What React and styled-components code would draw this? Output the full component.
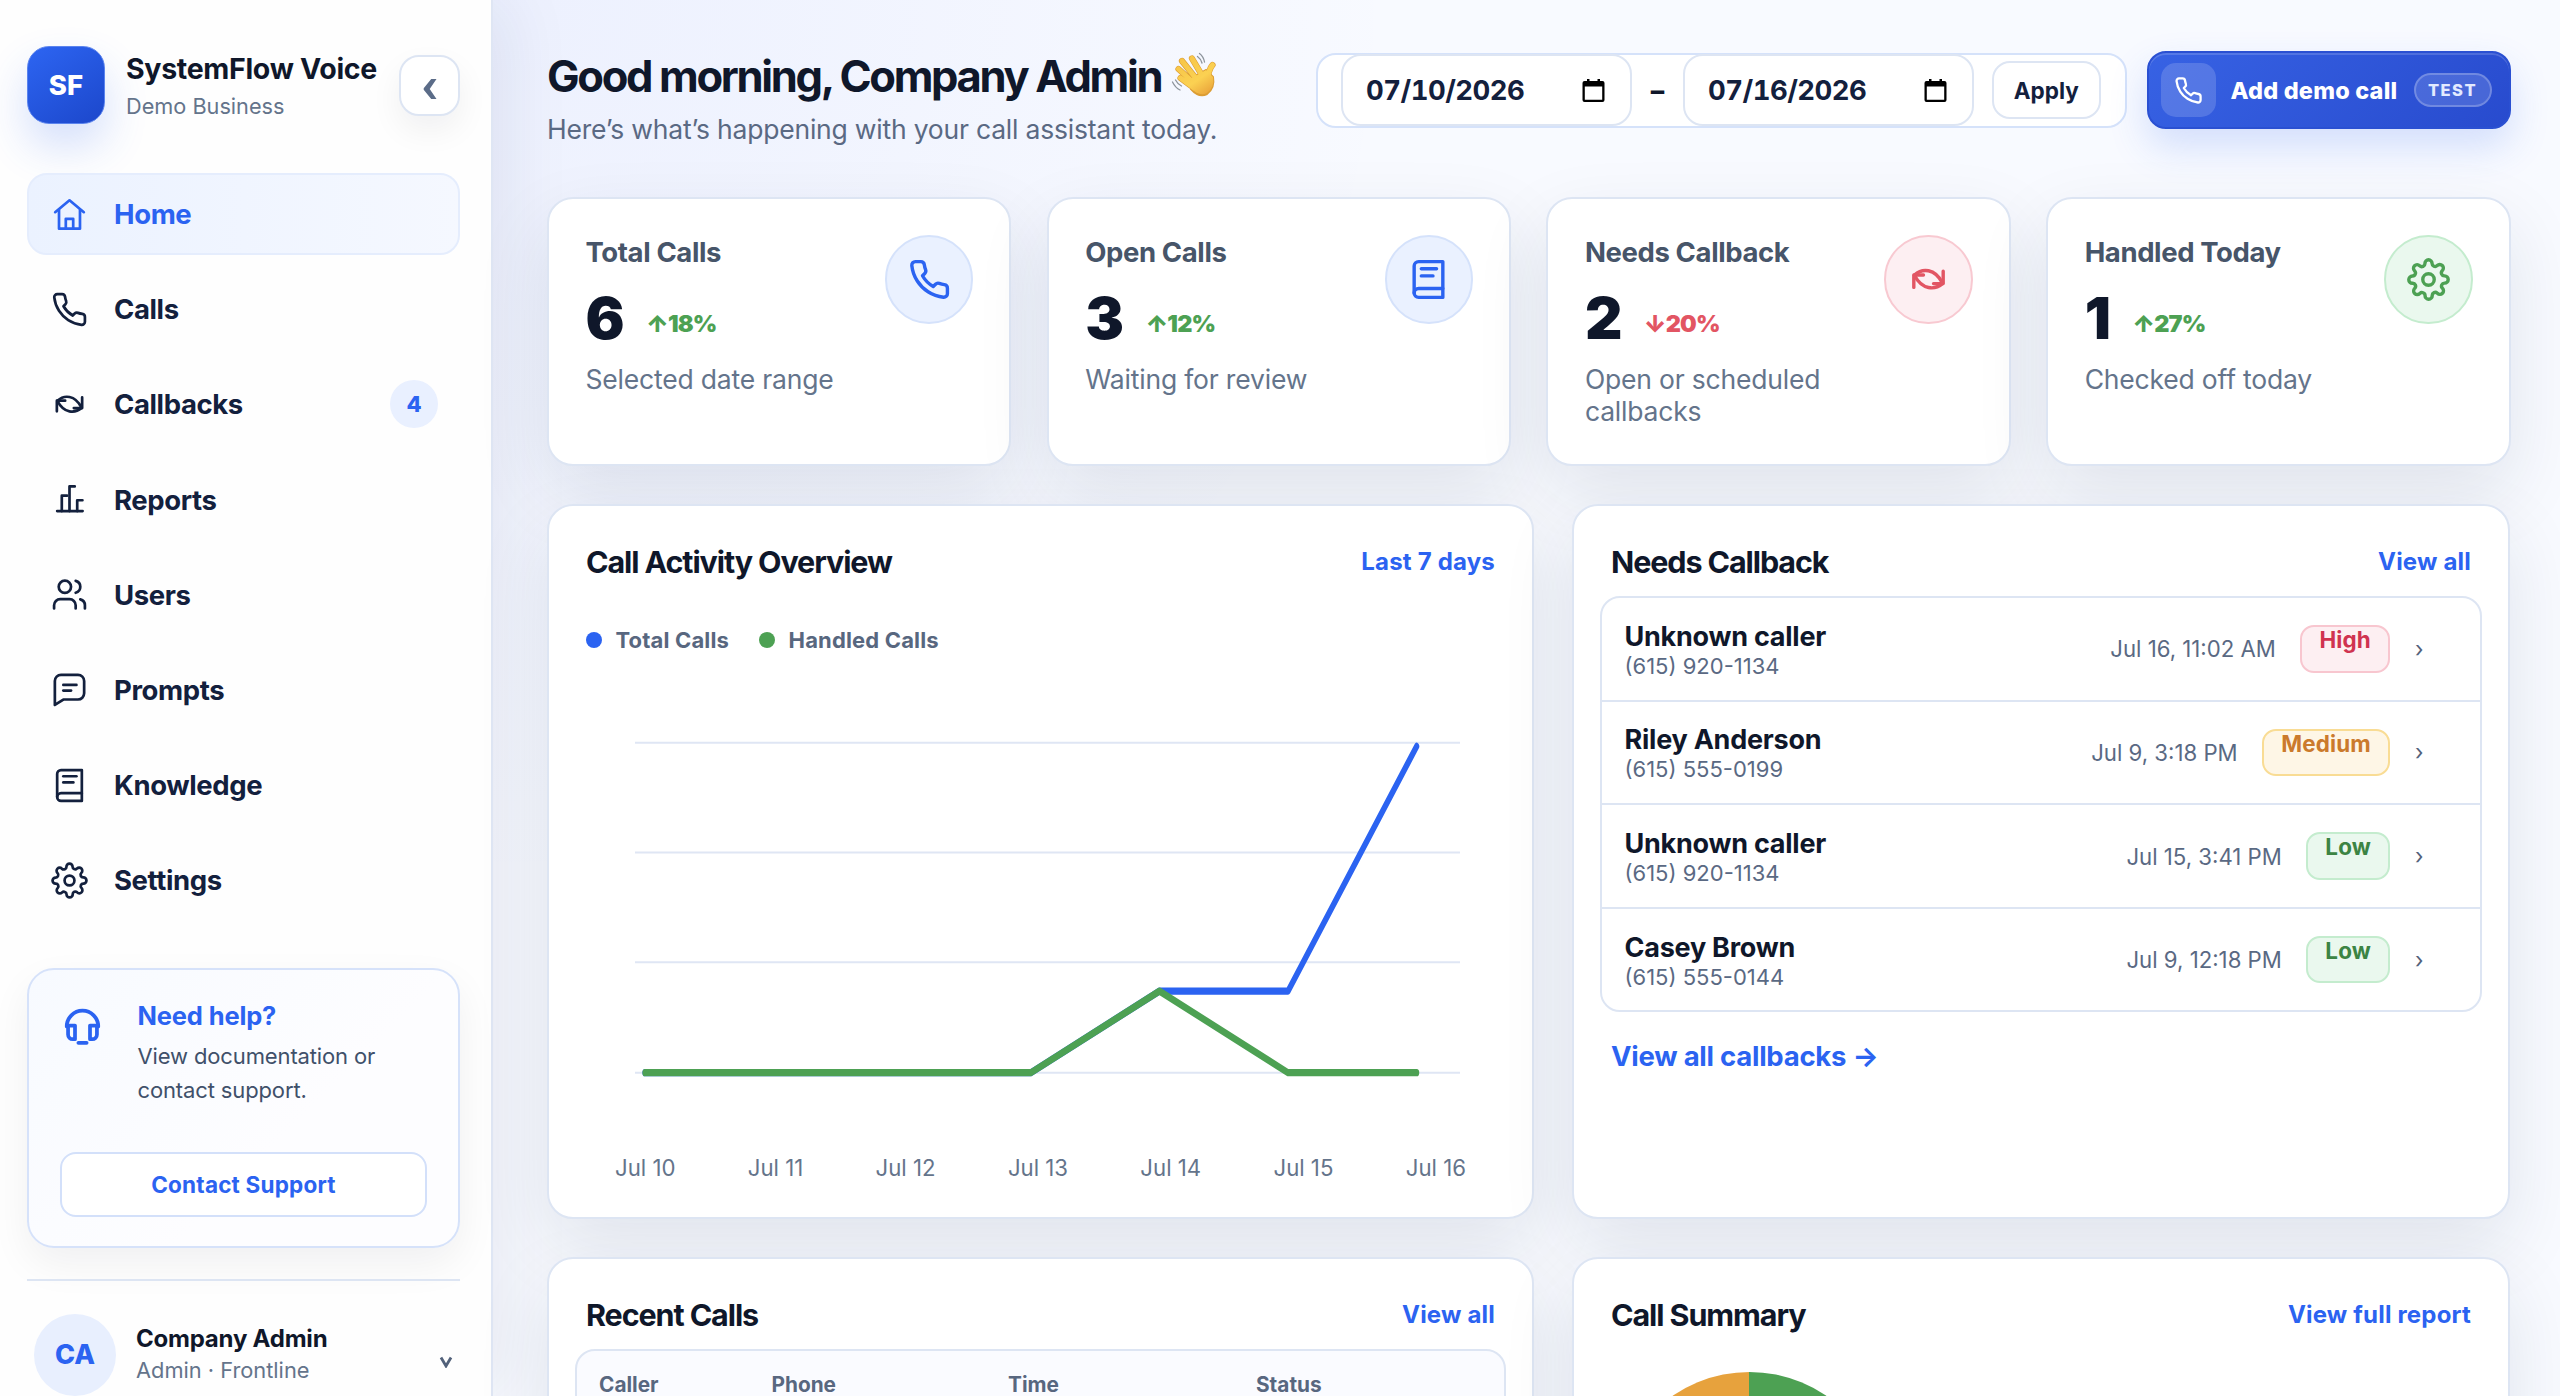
import React from 'react'
import styled, { createGlobalStyle, ThemeProvider } from 'styled-components'

const theme = {
  font: "Inter, 'Liberation Sans', sans-serif",
  ink: '#0f172a',
  nav: '#13203d',
  label: '#475569',
  muted: '#64748b',
  blue: '#2b63f1',
  green: '#4da153',
  red: '#e25563',
  line: '#dde5f3',
}

const tones = {
  blue: { color: '#2b63f1', bg: '#eaf1ff', border: '#d5e2fb' },
  red: { color: '#e25563', bg: '#fdeff2', border: '#f8c9d1' },
  green: { color: '#4da153', bg: '#eaf8ee', border: '#c4ecce' },
}

const priorities = {
  High: { color: '#d03350', bg: '#fdeff2', border: '#f8c6cf' },
  Medium: { color: '#cb7a2c', bg: '#fef6e6', border: '#f9dc94' },
  Low: { color: '#3c8443', bg: '#eaf8ee', border: '#c4ecce' },
}

const icons = {
  home: <><path d="M2.7 10.5 12 2.8l9.3 7.7" /><path d="M5.2 9v12.2h13.6V9" /><path d="M9.6 21v-6.2h4.8V21" /></>,
  phone: <path d="M22 16.92v3a2 2 0 0 1-2.18 2 19.79 19.79 0 0 1-8.63-3.07 19.5 19.5 0 0 1-6-6 19.79 19.79 0 0 1-3.07-8.67A2 2 0 0 1 4.11 2h3a2 2 0 0 1 2 1.72c.13.96.36 1.9.7 2.81a2 2 0 0 1-.45 2.11L8.09 9.91a16 16 0 0 0 6 6l1.27-1.27a2 2 0 0 1 2.11-.45c.91.34 1.85.57 2.81.7A2 2 0 0 1 22 16.92z" />,
  callback: <><path d="M20.2 7.4v6.9h-5.4" /><path d="M3.8 16.4V9.5h5.4" /><path d="M4.2 9.500C8.5 5.600 15.500 5.600 19.800 14" /><path d="M19.800 14.300C15.500 18 8.500 17.900 4.200 9.800" /></>,
  reports: <><path d="M4 19.5h16.5" /><path d="M7 19.5v-10h3.4" /><path d="M12 19.5v-16h3.4" /><path d="M17 19.5v-7h3.4" /></>,
  users: <><path d="M16 21v-2a4 4 0 0 0-4-4H6a4 4 0 0 0-4 4v2" /><circle cx="9" cy="7" r="4" /><path d="M22 21v-2a4 4 0 0 0-3-3.87" /><path d="M16 3.13a4 4 0 0 1 0 7.75" /></>,
  prompts: <><path d="M21.5 14.5a4 4 0 0 1-4 4H8l-5.5 3.5V6.5a4 4 0 0 1 4-4h11a4 4 0 0 1 4 4z" /><path d="M8 9h8.5" /><path d="M8 12.7h5" /></>,
  book: <><path d="M4 19.5A2.5 2.5 0 0 1 6.5 17H20" /><path d="M6.5 2H20v20H6.5A2.5 2.5 0 0 1 4 19.5v-15A2.5 2.5 0 0 1 6.5 2z" /><path d="M8 6h8.5" /><path d="M8 10h6.5" /></>,
  gear: <><circle cx="12" cy="12" r="3.2" /><path d="M19.4 15a1.65 1.65 0 0 0 .33 1.82l.06.06a2 2 0 0 1 0 2.83 2 2 0 0 1-2.83 0l-.06-.06a1.65 1.65 0 0 0-1.82-.33 1.65 1.65 0 0 0-1 1.51V21a2 2 0 0 1-2 2 2 2 0 0 1-2-2v-.09A1.65 1.65 0 0 0 9 19.4a1.65 1.65 0 0 0-1.82.33l-.06.06a2 2 0 0 1-2.83 0 2 2 0 0 1 0-2.83l.06-.06a1.65 1.65 0 0 0 .33-1.82 1.65 1.65 0 0 0-1.51-1H3a2 2 0 0 1-2-2 2 2 0 0 1 2-2h.09A1.65 1.65 0 0 0 4.6 9a1.65 1.65 0 0 0-.33-1.82l-.06-.06a2 2 0 0 1 0-2.83 2 2 0 0 1 2.83 0l.06.06a1.65 1.65 0 0 0 1.82.33H9a1.65 1.65 0 0 0 1-1.51V3a2 2 0 0 1 2-2 2 2 0 0 1 2 2v.09a1.65 1.65 0 0 0 1 1.51 1.65 1.65 0 0 0 1.82-.33l.06-.06a2 2 0 0 1 2.83 0 2 2 0 0 1 0 2.83l-.06.06a1.65 1.65 0 0 0-.33 1.82V9a1.65 1.65 0 0 0 1.51 1H21a2 2 0 0 1 2 2 2 2 0 0 1-2 2h-.09a1.65 1.65 0 0 0-1.51 1z" /></>,
  headset: <><path d="M3.6 12.5a8.4 8.4 0 0 1 16.8 0" /><path d="M4.3 12h3.7v7.3H6.8a2.5 2.5 0 0 1-2.5-2.5z" /><path d="M19.7 12H16v7.3h1.2a2.5 2.5 0 0 0 2.5-2.5z" /><path d="M9.8 21.2h4.4" /></>,
}

function Icon ({ name, size = 37, stroke = 1.75 }) {
  return (
    <svg
      width={size}
      height={size}
      viewBox="0 0 24 24"
      fill="none"
      stroke="currentColor"
      strokeWidth={stroke}
      strokeLinecap="round"
      strokeLinejoin="round"
      overflow="visible"
    >
      {icons[name]}
    </svg>
  )
}

function WaveIcon () {
  const fingers = 'M33 44 19.5 34M35 41 17.5 25M37 37 21 17M42 33 31 14.5M47 37Q47 26 51.5 21'
  return (
    <svg width="64" height="60" viewBox="0 0 64 60" fill="none" strokeLinecap="round">
      <defs>
        <linearGradient id="skin" x1="20" y1="14" x2="46" y2="52" gradientUnits="userSpaceOnUse">
          <stop offset="0" stopColor="#f7c548" />
          <stop offset=".6" stopColor="#fbd152" />
          <stop offset="1" stopColor="#e9a23a" />
        </linearGradient>
      </defs>
      <path d={fingers} stroke="#dc9d33" strokeWidth="6.2" />
      <path d="M31 34 45 26 52 33Q54 44 46 50Q38 54 30 45Z" fill="#dc9d33" stroke="#dc9d33" strokeWidth="2" />
      <path d={fingers} stroke="url(#skin)" strokeWidth="5" />
      <path d="M31 34 45 26 52 33Q54 43 46 49Q38 53 30 44Z" fill="url(#skin)" />
      <g stroke="#8d949c" strokeWidth="1.3">
        <path d="M36.5 12.5q3.5 2.5 4.5 6.5" />
        <path d="M38.5 9.5q4 3 5 8.5" />
        <path d="M14.5 36q2 4 6 6" />
        <path d="M11.5 38q3 6 7.5 8" />
      </g>
    </svg>
  )
}

const CalendarIcon = () => (
  <svg width="23" height="25" viewBox="0 0 23 25">
    <path fill="#000" fillRule="evenodd" d="M5 1h2.5v2h8V1H18v2h2.5A2 2 0 0 1 22.5 5v17a2 2 0 0 1-2 2h-18a2 2 0 0 1-2-2V5a2 2 0 0 1 2-2H5zM2.8 8.6v13.1h17.4V8.6z" />
  </svg>
)

const navItems = [
  { icon: 'home', label: 'Home', active: true },
  { icon: 'phone', label: 'Calls' },
  { icon: 'callback', label: 'Callbacks', count: 4 },
  { icon: 'reports', label: 'Reports' },
  { icon: 'users', label: 'Users' },
  { icon: 'prompts', label: 'Prompts' },
  { icon: 'book', label: 'Knowledge' },
  { icon: 'gear', label: 'Settings' },
]

const stats = [
  { label: 'Total Calls', value: 6, trend: '↑18%', note: 'Selected date range', icon: 'phone', tone: 'blue' },
  { label: 'Open Calls', value: 3, trend: '↑12%', note: 'Waiting for review', icon: 'book', tone: 'blue' },
  { label: 'Needs Callback', value: 2, trend: '↓20%', note: 'Open or scheduled callbacks', icon: 'callback', tone: 'red' },
  { label: 'Handled Today', value: 1, trend: '↑27%', note: 'Checked off today', icon: 'gear', tone: 'green' },
]

const callbacks = [
  { name: 'Unknown caller', phone: '(615) 920-1134', time: 'Jul 16, 11:02 AM', priority: 'High' },
  { name: 'Riley Anderson', phone: '(615) 555-0199', time: 'Jul 9, 3:18 PM', priority: 'Medium' },
  { name: 'Unknown caller', phone: '(615) 920-1134', time: 'Jul 15, 3:41 PM', priority: 'Low' },
  { name: 'Casey Brown', phone: '(615) 555-0144', time: 'Jul 9, 12:18 PM', priority: 'Low' },
]

const days = ['Jul 10', 'Jul 11', 'Jul 12', 'Jul 13', 'Jul 14', 'Jul 15', 'Jul 16']
const totalCalls = [0, 0, 0, 0, 1, 1, 4]
const handledCalls = [0, 0, 0, 0, 1, 0, 0]

const toPoints = (values) => values.map((v, i) => `${44.7 + i * 99.15},${209.7 - v * 44.7}`).join(' ')

function Chart () {
  return (
    <ChartSvg viewBox="0 0 700 240" preserveAspectRatio="none">
      {[28.9, 89, 149.2, 209.7].map((y) => (
        <line key={y} x1="37" x2="673" y1={y} y2={y} stroke="#dfe6f4" strokeWidth="1.1" />
      ))}
      <g fill="none" strokeWidth="4" strokeLinecap="round" strokeLinejoin="round">
        <polyline points={toPoints(totalCalls)} stroke="#2b63f1" />
        <polyline points={toPoints(handledCalls)} stroke="#4da153" />
      </g>
    </ChartSvg>
  )
}

function Sidebar () {
  return (
    <Aside>
      <Brand>
        <Logo>SF</Logo>
        <BrandText>
          <BrandName>SystemFlow Voice</BrandName>
          <BrandSub>Demo Business</BrandSub>
        </BrandText>
        <Collapse aria-label="Collapse sidebar">
          <svg width="14" height="20" viewBox="0 0 14 20"><path d="M8.2 0H13.5L6.7 10 13.5 20H8.2L.7 10.8V9.2Z" fill="currentColor" /></svg>
        </Collapse>
      </Brand>
      <Nav>
        {navItems.map((item) => (
          <NavItem key={item.label} $active={item.active}>
            <Icon name={item.icon} />
            <span>{item.label}</span>
            {!!item.count && <Count>{item.count}</Count>}
          </NavItem>
        ))}
      </Nav>
      <Help>
        <HelpTop>
          <Icon name="headset" size={45} stroke={2} />
          <div>
            <HelpTitle>Need help?</HelpTitle>
            <HelpText>View documentation or contact support.</HelpText>
          </div>
        </HelpTop>
        <HelpButton>Contact Support</HelpButton>
      </Help>
      <Account>
        <Avatar>CA</Avatar>
        <div>
          <AccountName>Company Admin</AccountName>
          <AccountRole>Admin · Frontline</AccountRole>
        </div>
        <svg width="14" height="12" viewBox="0 0 14 12"><path d="M2 1.5 7 10l5-8.5" fill="none" stroke="#52617a" strokeWidth="2.8" /></svg>
      </Account>
    </Aside>
  )
}

function App () {
  return (
    <ThemeProvider theme={theme}>
      <GlobalStyle />
      <Page>
        <Sidebar />
        <Main>
          <Header>
            <div>
              <Heading>Good morning, Company Admin<WaveIcon /></Heading>
              <SubHeading>Here’s what’s happening with your call assistant today.</SubHeading>
            </div>
            <Controls>
              <DateRange>
                <DateField>07/10/2026<CalendarIcon /></DateField>
                <Dash>–</Dash>
                <DateField>07/16/2026<CalendarIcon /></DateField>
                <Apply>Apply</Apply>
              </DateRange>
              <DemoButton>
                <DemoIcon><Icon name="phone" size={29} stroke={1.9} /></DemoIcon>
                <span>Add demo call</span>
                <TestTag>TEST</TestTag>
              </DemoButton>
            </Controls>
          </Header>

          <StatGrid>
            {stats.map((s) => (
              <StatCard key={s.label}>
                <div>
                  <StatLabel>{s.label}</StatLabel>
                  <StatRow>
                    <StatValue>{s.value}</StatValue>
                    <Trend $tone={s.tone === 'red' ? 'red' : 'green'}>{s.trend}</Trend>
                  </StatRow>
                  <StatNote>{s.note}</StatNote>
                </div>
                <StatIcon $tone={s.tone}><Icon name={s.icon} size={43} stroke={1.9} /></StatIcon>
              </StatCard>
            ))}
          </StatGrid>

          <PanelGrid>
            <Panel>
              <PanelHead>
                <PanelTitle>Call Activity Overview</PanelTitle>
                <PanelLink>Last 7 days</PanelLink>
              </PanelHead>
              <Legend>
                <LegendItem $color="#2b63f1">Total Calls</LegendItem>
                <LegendItem $color="#4da153">Handled Calls</LegendItem>
              </Legend>
              <Chart />
              <Days>{days.map((d) => <span key={d}>{d}</span>)}</Days>
            </Panel>
            <Panel>
              <PanelHead>
                <PanelTitle>Needs Callback</PanelTitle>
                <PanelLink>View all</PanelLink>
              </PanelHead>
              <List>
                {callbacks.map((c) => (
                  <ListRow key={c.time}>
                    <Caller>
                      <CallerName>{c.name}</CallerName>
                      <CallerPhone>{c.phone}</CallerPhone>
                    </Caller>
                    <CallTime>{c.time}</CallTime>
                    <Priority $level={c.priority}>{c.priority}</Priority>
                    <Chevron>›</Chevron>
                  </ListRow>
                ))}
              </List>
              <AllLink>View all callbacks →</AllLink>
            </Panel>
            <Panel>
              <PanelHead>
                <PanelTitle>Recent Calls</PanelTitle>
                <PanelLink>View all</PanelLink>
              </PanelHead>
              <Table>
                <span>Caller</span>
                <span>Phone</span>
                <span>Time</span>
                <span>Status</span>
              </Table>
            </Panel>
            <Panel>
              <PanelHead>
                <PanelTitle>Call Summary</PanelTitle>
                <PanelLink>View full report</PanelLink>
              </PanelHead>
              <Donut />
            </Panel>
          </PanelGrid>
        </Main>
      </Page>
    </ThemeProvider>
  )
}

const GlobalStyle = createGlobalStyle`
  * {
    box-sizing: border-box;
  }
  body {
    margin: 0;
    overflow: hidden;
    font-family: ${(props) => props.theme.font};
    color: ${(props) => props.theme.ink};
    -webkit-font-smoothing: antialiased;
  }
  button {
    font-family: inherit;
    padding: 0;
    cursor: pointer;
  }
  svg {
    flex: none;
    display: block;
  }
`

const Page = styled.div`
  display: flex;
  height: 1396px;
  overflow: hidden;
  background: radial-gradient(circle at 20% 0%, rgba(55, 90, 240, 0.06), transparent 36%), #f8faff;
`

/* sidebar */

const Aside = styled.aside`
  display: flex;
  flex-direction: column;
  flex: none;
  width: 493px;
  height: 1396px;
  padding: 46px 31px 0 27px;
  background: #fefefe;
  border-right: 2px solid #dfe6f4;
  box-shadow: 14px 0 64px rgba(23, 37, 84, 0.08);
`

const Brand = styled.div`
  display: flex;
  align-items: flex-start;
  height: 127px;
`

const Logo = styled.div`
  display: flex;
  align-items: center;
  justify-content: center;
  width: 78px;
  height: 78px;
  border-radius: 22px;
  border: 1px solid #5b84ee;
  background: linear-gradient(145deg, #2d65f2, #1c47cb);
  box-shadow: 0 22px 44px rgba(43, 99, 241, 0.2);
  color: #fff;
  font-size: 27.5px;
  font-weight: 850;
`

const BrandText = styled.div`
  flex: 1;
  padding: 4px 0 0 21px;
  white-space: nowrap;
`

const BrandName = styled.div`
  font-size: 28.5px;
  font-weight: 700;
  line-height: 38px;
  letter-spacing: -0.011em;
`

const BrandSub = styled.div`
  color: ${(props) => props.theme.muted};
  font-size: 21.7px;
  line-height: 37px;
`

const Collapse = styled.button`
  display: flex;
  align-items: center;
  justify-content: center;
  width: 61px;
  height: 61px;
  margin-top: 8.5px;
  padding-top: 7px;
  border: 2px solid ${(props) => props.theme.line};
  border-radius: 20px;
  background: #fff;
  box-shadow: 0 14px 32px rgba(15, 23, 42, 0.06);
  color: #5b6c88;
`

const Nav = styled.nav`
  display: flex;
  flex-direction: column;
  gap: 13.2px;
`

const NavItem = styled.a`
  display: flex;
  align-items: center;
  gap: 26px;
  height: 82px;
  padding: 0 20px 0 22px;
  border: 2px solid ${(props) => props.$active ? '#e5edfd' : 'transparent'};
  border-radius: 20px;
  background: ${(props) => props.$active ? 'linear-gradient(90deg, #ebf2ff, #f5f8ff)' : 'none'};
  color: ${(props) => props.$active ? props.theme.blue : props.theme.nav};
  font-size: 27.5px;
  font-weight: 700;
  letter-spacing: -0.014em;
`

const Count = styled.span`
  display: flex;
  align-items: center;
  justify-content: center;
  width: 48px;
  height: 48px;
  margin-left: auto;
  border-radius: 50%;
  background: #e9f0ff;
  color: ${(props) => props.theme.blue};
  font-size: 22px;
  font-weight: 800;
`

const Help = styled.div`
  height: 280.5px;
  margin-top: 46.5px;
  padding: 29px 31px;
  border: 2px solid #d6e2fa;
  border-radius: 27px;
  background: linear-gradient(135deg, #f7faff, #fdfdff 60%);
  box-shadow: 0 16px 40px rgba(15, 23, 42, 0.06);
`

const HelpTop = styled.div`
  display: flex;
  gap: 32.5px;
  height: 153px;
  color: ${(props) => props.theme.blue};

  svg {
    margin-top: 4px;
  }
`

const HelpTitle = styled.div`
  font-size: 25.5px;
  font-weight: 700;
  line-height: 34px;
  letter-spacing: -0.006em;
`

const HelpText = styled.div`
  width: 250px;
  margin-top: 6px;
  color: #40506a;
  font-size: 22px;
  line-height: 34px;
  letter-spacing: -0.006em;
`

const HelpButton = styled.button`
  width: 100%;
  height: 65px;
  border: 2px solid #d3e0fa;
  border-radius: 16px;
  background: #fff;
  color: ${(props) => props.theme.blue};
  font-size: 22.5px;
  font-weight: 750;
  letter-spacing: 0.009em;
`

const Account = styled.div`
  display: flex;
  align-items: center;
  gap: 20px;
  margin-top: 30.5px;
  padding: 33px 7px 0 7px;
  border-top: 2px solid ${(props) => props.theme.line};
  white-space: nowrap;

  > svg {
    margin: 15px 0 0 auto;
  }
`

const Avatar = styled.div`
  display: flex;
  align-items: center;
  justify-content: center;
  flex: none;
  width: 82px;
  height: 82px;
  border-radius: 50%;
  background: #e8effe;
  color: ${(props) => props.theme.blue};
  font-size: 27px;
  font-weight: 800;
`

const AccountName = styled.div`
  font-size: 24px;
  font-weight: 700;
  line-height: 32px;
  letter-spacing: -0.009em;
`

const AccountRole = styled.div`
  color: ${(props) => props.theme.muted};
  font-size: 21.8px;
  line-height: 31px;
`

/* header */

const Main = styled.main`
  flex: 1;
  min-width: 0;
  padding: 49px 49.5px 0 54px;
`

const Header = styled.header`
  display: flex;
  justify-content: space-between;
  align-items: flex-start;
  height: 148px;
  white-space: nowrap;
`

const Heading = styled.h1`
  display: flex;
  height: 54px;
  margin: 0;
  font-size: 43.5px;
  font-weight: 720;
  line-height: 54px;
  letter-spacing: -0.0535em;

  svg {
    margin-top: -5px;
  }
`

const SubHeading = styled.p`
  margin: 6px 0 0;
  color: #5a6983;
  font-size: 26.5px;
  line-height: 40px;
  letter-spacing: -0.008em;
`

const Controls = styled.div`
  display: flex;
  align-items: center;
  gap: 20px;
  margin-top: 2px;
`

const DateRange = styled.div`
  display: flex;
  align-items: center;
  height: 75px;
  padding: 0 24px 0 23.5px;
  border: 2px solid #d5e2fa;
  border-radius: 20px;
  background: #fff;
`

const DateField = styled.div`
  display: flex;
  align-items: center;
  justify-content: space-between;
  width: 291px;
  height: 72px;
  padding: 0 25px 0 23px;
  border: 2px solid ${(props) => props.theme.line};
  border-radius: 20px;
  background: #fff;
  color: ${(props) => props.theme.nav};
  font-size: 27.5px;
  font-weight: 650;
  font-variant-numeric: tabular-nums;
  letter-spacing: -0.019em;
`

const Dash = styled.span`
  width: 51px;
  text-align: center;
  font-size: 27px;
  font-weight: 800;
`

const Apply = styled.button`
  width: 109.5px;
  height: 58px;
  margin-left: 17.5px;
  border: 2px solid ${(props) => props.theme.line};
  border-radius: 18px;
  background: #fff;
  color: ${(props) => props.theme.nav};
  font-size: 22.5px;
  font-weight: 750;
`

const DemoButton = styled.button`
  display: flex;
  align-items: center;
  width: 363.5px;
  height: 78px;
  padding-left: 12px;
  border: 2px solid #2a50d2;
  border-radius: 19px;
  background: linear-gradient(135deg, #3762e4, #284bce);
  box-shadow: 0 18px 38px rgba(43, 99, 241, 0.18), inset 0 2px 0 rgba(255, 255, 255, 0.16);
  color: #fff;
  font-size: 23.5px;
  font-weight: 760;
  letter-spacing: 0.008em;
`

const DemoIcon = styled.span`
  display: flex;
  align-items: center;
  justify-content: center;
  width: 54.5px;
  height: 54.5px;
  margin-right: 15px;
  border-radius: 15px;
  background: rgba(255, 255, 255, 0.16);
`

const TestTag = styled.span`
  width: 78px;
  height: 34px;
  margin-left: auto;
  margin-right: 17px;
  border: 2px solid rgba(255, 255, 255, 0.22);
  border-radius: 17px;
  background: rgba(255, 255, 255, 0.14);
  color: #e3eaff;
  font-size: 16.5px;
  font-weight: 850;
  line-height: 30px;
  letter-spacing: 0.09em;
`

/* stat cards */

const StatGrid = styled.div`
  display: grid;
  grid-template-columns: repeat(4, 1fr);
  gap: 35.4px;
`

const StatCard = styled.section`
  display: flex;
  justify-content: space-between;
  height: 268.6px;
  padding: 36px 36px 36px 36.5px;
  border: 2px solid ${(props) => props.theme.line};
  border-radius: 26px;
  background: #fff;
  box-shadow: 0 28px 72px rgba(23, 37, 70, 0.1);
`

const StatLabel = styled.div`
  color: ${(props) => props.theme.label};
  font-size: 27.5px;
  font-weight: 680;
  line-height: 34px;
  letter-spacing: -0.014em;
`

const StatRow = styled.div`
  display: flex;
  align-items: center;
  height: 60px;
  margin-top: 19px;
`

const StatValue = styled.span`
  font-size: 58px;
  font-weight: 900;
  line-height: 60px;
  letter-spacing: -0.01em;
`

const Trend = styled.span`
  margin: 10.5px 0 0 22px;
  color: ${(props) => props.theme[props.$tone]};
  font-size: 23.5px;
  font-weight: 900;
  letter-spacing: -0.035em;
`

const StatNote = styled.div`
  max-width: 260px;
  margin-top: 14.5px;
  color: ${(props) => props.theme.muted};
  font-size: 26.5px;
  line-height: 32.7px;
  letter-spacing: -0.007em;
`

const StatIcon = styled.div`
  display: flex;
  align-items: center;
  justify-content: center;
  flex: none;
  width: 88.5px;
  height: 88.5px;
  border: 2px solid ${(props) => tones[props.$tone].border};
  border-radius: 50%;
  background: ${(props) => tones[props.$tone].bg};
  color: ${(props) => tones[props.$tone].color};
`

/* panels */

const PanelGrid = styled.div`
  display: grid;
  grid-template-columns: 987px 938px;
  grid-template-rows: 714.5px 714.5px;
  gap: 38.8px 38px;
  margin-top: 38.6px;
`

const Panel = styled.section`
  min-width: 0;
  padding: 36px 26px;
  border: 2px solid ${(props) => props.theme.line};
  border-radius: 26px;
  background: #fff;
  box-shadow: 0 28px 72px rgba(23, 37, 70, 0.1);
`

const PanelHead = styled.div`
  display: flex;
  align-items: center;
  justify-content: space-between;
  height: 38px;
  padding: 0 11px;
`

const PanelTitle = styled.h2`
  margin: 0;
  font-size: 30.5px;
  font-weight: 700;
  letter-spacing: -0.036em;
`

const PanelLink = styled.a`
  color: ${(props) => props.theme.blue};
  font-size: 24px;
  font-weight: 720;
  letter-spacing: 0.008em;
`

const Legend = styled.div`
  display: flex;
  gap: 30px;
  margin: 45.5px 11px 0;
`

const LegendItem = styled.span`
  display: flex;
  align-items: center;
  color: #58677f;
  font-size: 22px;
  font-weight: 660;
  line-height: 28px;
  letter-spacing: 0.007em;

  &::before {
    content: '';
    width: 16px;
    height: 16px;
    margin-right: 13.5px;
    border-radius: 50%;
    background: ${(props) => props.$color};
  }
`

const ChartSvg = styled.svg`
  width: 908px;
  height: 438px;
  margin: 36.5px 0 0 12px;
`

const Days = styled.div`
  display: flex;
  justify-content: space-between;
  margin: 26px 40px 0 40px;
  color: ${(props) => props.theme.muted};
  font-size: 22.2px;
  line-height: 28px;
`

const List = styled.div`
  margin-top: 16px;
  border: 2px solid ${(props) => props.theme.line};
  border-radius: 20px;
`

const ListRow = styled.div`
  display: flex;
  align-items: center;
  height: 101.5px;
  padding: 0 58px 0 22.5px;
  white-space: nowrap;

  & + & {
    height: 103.6px;
    border-top: 2px solid ${(props) => props.theme.line};
  }
`

const Caller = styled.div`
  flex: 1;
  padding-top: 2px;
`

const CallerName = styled.div`
  font-size: 27px;
  font-weight: 680;
  line-height: 32px;
  letter-spacing: -0.009em;
`

const CallerPhone = styled.div`
  color: #5a6983;
  font-size: 22px;
  line-height: 26px;
`

const CallTime = styled.span`
  margin-right: 24.5px;
  color: #5a6983;
  font-size: 22.2px;
`

const Priority = styled.span`
  height: 47.5px;
  margin-right: 25px;
  padding: 0 17px;
  border: 2px solid ${(props) => priorities[props.$level].border};
  border-radius: 14px;
  background: ${(props) => priorities[props.$level].bg};
  color: ${(props) => priorities[props.$level].color};
  font-size: 22.4px;
  font-weight: 750;
  line-height: 25px;
  letter-spacing: 0.008em;
`

const Chevron = styled.span`
  width: 7px;
  color: #52617a;
  font-size: 22px;
`

const AllLink = styled.a`
  display: block;
  margin: 27px 11px 0;
  color: ${(props) => props.theme.blue};
  font-size: 27.5px;
  font-weight: 740;
  line-height: 34px;
  letter-spacing: -0.009em;
`

const Table = styled.div`
  display: grid;
  grid-template-columns: 172.5px 236.5px 248px 1fr;
  height: 340px;
  margin-top: 16px;
  padding: 0 22px;
  border: 2px solid ${(props) => props.theme.line};
  border-radius: 20px;
  background: #fafbff;
  color: #58677f;
  font-size: 20.8px;
  font-weight: 700;
  line-height: 68px;
`

const Donut = styled.div`
  width: 271px;
  height: 271px;
  margin: 39px 0 0 14px;
  border-radius: 50%;
  background: conic-gradient(#4da153 0 50%, #e7a23d 50% 100%);
`

export default App
